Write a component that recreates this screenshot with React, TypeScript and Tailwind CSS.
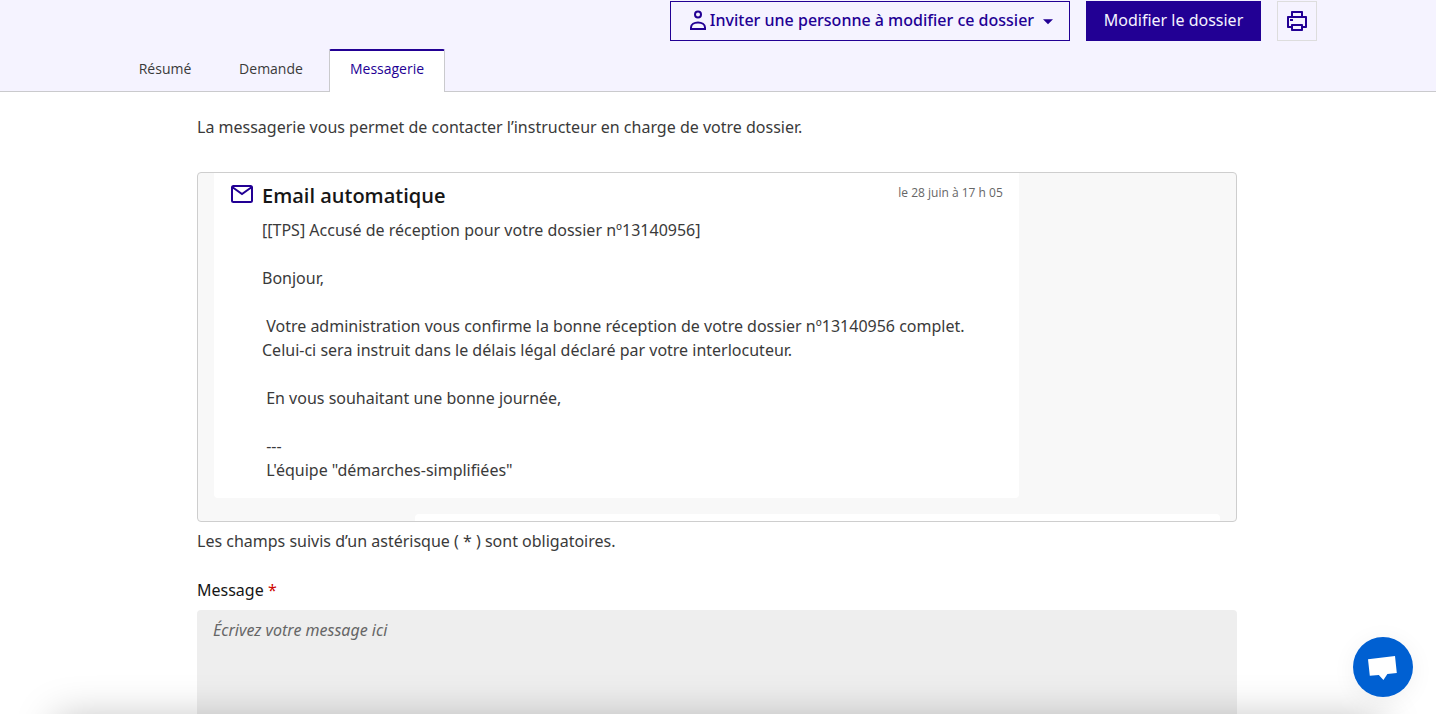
import React from "react";
import { RiArrowDownSFill, RiPrinterLine } from "react-icons/ri";

function UserIcon() {
  return (
    <svg viewBox="0 0 24 24" className="size-6 shrink-0" fill="none" stroke="currentColor" strokeWidth="2" aria-hidden="true">
      <circle cx="12" cy="5.5" r="3" />
      <path d="M5 20v-1.5c0-3 3.2-5 7-5s7 2 7 5V20z" />
    </svg>
  );
}

function MailIcon() {
  return (
    <svg viewBox="0 0 24 24" className="mt-px size-6 shrink-0 text-[#220094]" fill="none" stroke="currentColor" strokeWidth="2" aria-hidden="true">
      <rect x="2" y="4" width="20" height="16" rx="1.5" />
      <path d="M2.5 5.2 12 12l9.5-6.8" />
    </svg>
  );
}

function Tabs() {
  return (
    <nav aria-label="Dossier" className="mt-2 -mb-px flex items-stretch font-['Open_Sans',sans-serif] text-sm leading-6">
      <a href="#resume" className="w-24 pt-2 text-center text-[#3a3a3a]">
        Résumé
      </a>
      <a href="#demande" className="w-[116px] pt-2 text-center text-[#3a3a3a]">
        Demande
      </a>
      <a
        href="#messagerie"
        aria-current="page"
        className="h-[43px] w-[116px] rounded-t-xs border-x border-t-2 border-x-[#cacacd] border-t-[#220094] bg-white pt-1.5 text-center font-medium text-[#220094]"
      >
        Messagerie
      </a>
    </nav>
  );
}

function Header() {
  return (
    <header className="border-b border-[#cacacd] bg-[#f5f3ff] pt-px pr-0.5">
      <div className="mx-auto max-w-[1200px]">
        <div className="flex justify-end gap-4 text-base leading-6 font-medium">
          <button
            type="button"
            className="flex h-10 w-[400px] items-center justify-center border border-[#220094] pl-1 text-[#220094]"
          >
            <UserIcon />
            <span className="pb-0.5 whitespace-nowrap">Inviter une personne à modifier ce dossier</span>
            <RiArrowDownSFill className="ml-1 size-5 shrink-0" />
          </button>
          <button type="button" className="h-10 w-[175px] bg-[#220094] pb-0.5 font-normal text-[#f5f3ff]">
            Modifier le dossier
          </button>
          <button
            type="button"
            aria-label="Imprimer"
            className="flex size-10 items-center justify-center border border-[#dddddd] text-[#220094]"
          >
            <RiPrinterLine className="size-6" />
          </button>
        </div>
        <Tabs />
      </div>
    </header>
  );
}

const mail = `[[TPS] Accusé de réception pour votre dossier nº13140956]

Bonjour,

 Votre administration vous confirme la bonne réception de votre dossier nº13140956 complet. Celui-ci sera instruit dans le délais légal déclaré par votre interlocuteur.

 En vous souhaitant une bonne journée,

 ---
 L'équipe "démarches-simplifiées"`;

function Thread() {
  return (
    <div className="mt-[33px] h-[350px] overflow-hidden rounded border border-[#cecece] bg-[#f8f8f8] px-4">
      <article className="flex w-4/5 gap-2 rounded-b bg-white px-4 pt-2 pb-4">
        <MailIcon />
        <div className="min-w-0 flex-1">
          <div className="flex justify-between font-['Open_Sans',sans-serif]">
            <h2 className="pt-px text-xl leading-7 font-semibold text-[#161616]">Email automatique</h2>
            <time className="text-xs leading-6 text-[#666666]">le 28 juin à 17 h 05</time>
          </div>
          <p className="mt-2 whitespace-pre-wrap">{mail}</p>
        </div>
      </article>
      <article className="mt-4 ml-auto h-40 w-4/5 rounded bg-white" />
    </div>
  );
}

function ChatButton() {
  return (
    <button
      type="button"
      aria-label="Ouvrir la discussion"
      className="fixed right-[23px] bottom-[17px] size-[60px] rounded-full bg-[#0060d2] shadow-[0_4px_24px_rgba(0,0,0,0.06)]"
    >
      <svg viewBox="0 0 60 60" className="size-full" fill="#ffffff">
        <path d="M15 22.2 42 19l1.8 17-9.4 1-4 6-4.6-5-9 .8z" />
      </svg>
    </button>
  );
}

export default function App() {
  return (
    <div className="h-screen overflow-hidden bg-white font-['Noto_Sans',sans-serif] text-base leading-6 text-[#3a3a3a]">
      <Header />
      <main className="pt-[23px] pr-0.5">
        <div className="mx-auto max-w-[1040px]">
          <p>La messagerie vous permet de contacter l’instructeur en charge de votre dossier.</p>
          <Thread />
          <p className="mt-[7px]">Les champs suivis d’un astérisque ( * ) sont obligatoires.</p>
          <label htmlFor="message" className="mt-[25px] block text-[#161616]">
            Message <span className="text-[#ce0500]">*</span>
          </label>
          <textarea
            id="message"
            placeholder="Écrivez votre message ici"
            className="mt-2 block h-40 w-full resize-none rounded-t bg-[#eeeeee] px-4 py-2 placeholder:text-[#666666] placeholder:italic"
          />
        </div>
      </main>
      <div
        aria-hidden="true"
        className="pointer-events-none fixed inset-x-14 top-full h-20 shadow-[0_4px_40px_rgba(0,0,0,0.25)]"
      />
      <ChatButton />
    </div>
  );
}
